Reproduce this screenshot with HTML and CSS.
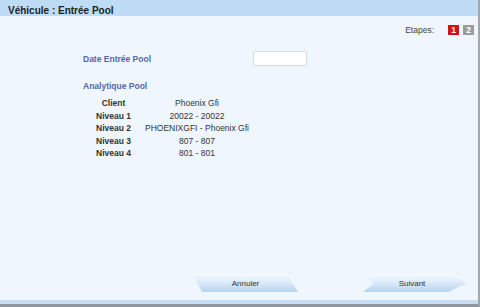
FILE: index.html
```html
<!DOCTYPE html>
<html lang="fr">
  <head>
    <meta charset="UTF-8" />
    <title>Véhicule : Entrée Pool</title>
    <link rel="stylesheet" href="styles.css">
  </head>
  <body>
    <div class="window">
      <div class="titlebar">Véhicule : Entrée Pool</div>

      <div class="steps">
        <span class="steps_label">Etapes:</span>
        <span class="step step_active">1</span>
        <span class="step">2</span>
      </div>

      <div class="form">
        <div class="form_row">
          <label class="label">Date Entrée Pool</label>
          <input type="text" class="date_input" />
        </div>

        <div class="label section_title">Analytique Pool</div>

        <div class="analytique">
          <div class="key">Client</div>
          <div class="value">Phoenix Gfi</div>
          <div class="key">Niveau 1</div>
          <div class="value">20022 - 20022</div>
          <div class="key">Niveau 2</div>
          <div class="value">PHOENIXGFI - Phoenix Gfi</div>
          <div class="key">Niveau 3</div>
          <div class="value">807 - 807</div>
          <div class="key">Niveau 4</div>
          <div class="value">801 - 801</div>
        </div>
      </div>

      <div class="actions">
        <button class="btn btn_cancel">Annuler</button>
        <button class="btn btn_next">Suivant</button>
      </div>

      <div class="bottom_strip"></div>
    </div>
  </body>
</html>
```

FILE: styles.css
```css
body {
  margin: 0;
  font-family: "Liberation Sans", Arial, sans-serif;
  color: #333;
}

.window {
  height: 307px;
  box-sizing: border-box;
  display: flex;
  flex-direction: column;
  background-color: #eff6fd;
  border-right: 2px solid #a3a8ad;
  border-bottom: 3px solid #8f969d;
}

.titlebar {
  height: 16px;
  box-sizing: border-box;
  padding: 5px 0 0 8px;
  background-color: #bedcf6;
  font-size: 10px;
  line-height: 11px;
  font-weight: bold;
  color: #222;
}

.steps {
  display: flex;
  justify-content: flex-end;
  align-items: center;
  gap: 4px;
  margin-top: 9px;
  padding-right: 4px;
  height: 10px;
  font-size: 8.5px;
}

.steps_label {
  margin-right: 10px;
  color: #444;
}

.step {
  width: 11px;
  height: 10px;
  line-height: 10px;
  text-align: center;
  font-weight: bold;
  color: #fff;
  background-color: #9c9c9c;
}

.step_active {
  background-color: #d0121c;
}

.form {
  padding-left: 83px;
  font-size: 8.5px;
}

.form_row {
  display: flex;
  align-items: center;
  margin-top: 16px;
  height: 15px;
}

.label {
  font-weight: bold;
  color: #5567a9;
}

.date_input {
  margin-left: 102px;
  width: 54px;
  height: 15px;
  box-sizing: border-box;
  padding: 0;
  border: 1px solid #d3dce6;
  border-radius: 2px;
  background-color: #fff;
}

.section_title {
  margin-top: 14px;
  line-height: 12px;
}

.analytique {
  display: grid;
  grid-template-columns: 61px 106px;
  grid-auto-rows: 12.5px;
  margin-top: 5px;
  line-height: 12.5px;
  text-align: center;
}

.key {
  font-weight: bold;
}

.value {
  white-space: nowrap;
}

.actions {
  display: flex;
  gap: 65px;
  margin-top: auto;
  padding-left: 193px;
  margin-bottom: 8px;
}

.btn {
  height: 18px;
  padding: 0;
  border: none;
  font-family: "Liberation Sans", Arial, sans-serif;
  font-size: 8px;
  color: #333;
  background: linear-gradient(to bottom, #f7fbff 0%, #dcebf9 45%, #b7d3ef 100%);
}

.btn_cancel {
  width: 105px;
  clip-path: polygon(0 0, 94px 0, 105px 100%, 9px 100%);
}

.btn_next {
  width: 104px;
  padding-right: 6px;
  clip-path: polygon(0 0, 85px 0, 104px 50%, 85px 100%, 0 100%, 11px 50%);
}

.bottom_strip {
  height: 4px;
  background-color: #c6ddf3;
}
```
